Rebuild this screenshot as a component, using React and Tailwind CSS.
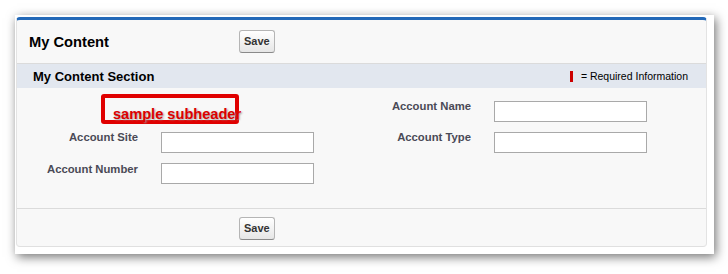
import React from "react";

const font = "font-['Liberation_Sans',Arial,sans-serif]";

function SaveButton() {
  return (
    <button
      type="button"
      className="h-[23px] px-[4px] rounded-[3px] border border-[#b5b5b5] border-b-[#8a8a8a] bg-gradient-to-b from-white to-[#e6e6e6] text-[11px] font-bold text-[#333] leading-none"
    >
      Save
    </button>
  );
}

function Label({ children, className = "" }) {
  return (
    <div
      className={`text-right pr-3 text-[11.3px] leading-[13px] font-bold text-[#4a4a56] ${className}`}
    >
      {children}
    </div>
  );
}

function Field({ className = "" }) {
  return (
    <div className={`pl-[11px] ${className}`}>
      <input
        type="text"
        className="block w-[153px] h-[21px] bg-white border border-[#a9a9a9] outline-none"
      />
    </div>
  );
}

export default function App() {
  return (
    <div className={`w-[728px] h-[274px] bg-white pl-[15px] pt-[15px] ${font}`}>
      {/* screenshot frame */}
      <div className="w-[699px] h-[239px] bg-white pl-[1px] pt-[2px] shadow-[2px_3px_10px_rgba(0,0,0,0.55)]">
        {/* page block */}
        <div className="w-[691px] h-[230px] flex flex-col bg-[#f8f8f8] border-x border-b border-x-[#e3e3e3] border-b-[#e0e0e0] border-t-[3px] border-t-[#2369b8] rounded-[4px]">
          {/* title bar */}
          <div className="h-[44px] flex items-center border-b border-[#dbdbdb]">
            <h2 className="w-[222px] pl-[12px] pt-[1px] text-[14.7px] font-bold text-black">
              My Content
            </h2>
            <SaveButton />
          </div>

          {/* section header */}
          <div className="h-[24px] flex items-center justify-between bg-[#e2e7ef] pl-[16px] pr-[18px] pt-[1px]">
            <h3 className="text-[13px] font-bold text-black">My Content Section</h3>
            <div className="flex items-center gap-[8px] text-[10.5px] text-black">
              <span className="w-[3px] h-[11px] bg-[#cc0000]" />
              <span>= Required Information</span>
            </div>
          </div>

          {/* section body */}
          <div className="h-[121px] pt-[6px] grid grid-cols-[133px_213px_120px_1fr] content-start border-b border-[#dbdbdb]">
            {/* row 1 */}
            <div className="col-span-2 pl-[84px] h-[33px]">
              <div className="w-[138px] h-[30px] border-[4px] border-[#e00000] rounded-[3px] pl-[8px] pt-[4px]">
                <span className="whitespace-nowrap text-[14.6px] leading-[17px] font-bold text-[#dd0000] [text-shadow:1px_1px_2px_#9a9a9a]">
                  sample subheader
                </span>
              </div>
            </div>
            <Label className="pt-[6px]">Account Name</Label>
            <Field className="pt-[7px]" />

            {/* row 2 */}
            <Label className="pt-[4px]">Account Site</Label>
            <Field className="pt-[5px] pb-[5px]" />
            <Label className="pt-[4px]">Account Type</Label>
            <Field className="pt-[5px] pb-[5px]" />

            {/* row 3 */}
            <Label className="pt-[5px]">Account Number</Label>
            <Field className="pt-[5px] pb-[5px]" />
            <div />
            <div />
          </div>

          {/* footer */}
          <div className="flex-1 pt-[6px] pl-[222px]">
            <SaveButton />
          </div>
        </div>
      </div>
    </div>
  );
}
